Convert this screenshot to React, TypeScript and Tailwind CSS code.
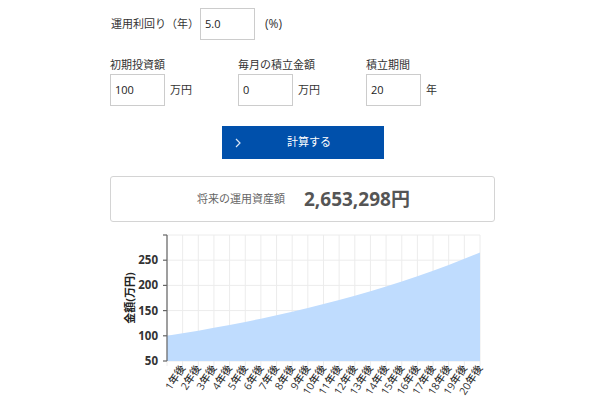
import React from 'react';

const X0 = 167;
const STEP = 15.65;
const yOf = (v: number) => 361 - (v - 50) * 0.504;

const values = Array.from({ length: 21 }, (_, i) => 100 * Math.pow(1.05, i));

const Field: React.FC<{ label: string; value: string; unit: string }> = ({ label, value, unit }) => (
  <div className="w-[128px]">
    <div className="h-[16px] leading-[16px] text-[11px] text-[#333]">{label}</div>
    <div className="mt-[1px] flex items-center">
      <div className="w-[55px] h-[32px] border border-[#ccc] flex items-center pl-[4px] text-[11px] text-[#222]">
        {value}
      </div>
      <span className="ml-[5px] text-[11px] text-[#333]">{unit}</span>
    </div>
  </div>
);

const Chart: React.FC = () => {
  const pts = values.map((v, i) => `${X0 + i * STEP},${yOf(v)}`);
  const area = `M${X0},361 L${pts.join(' L')} L${X0 + 20 * STEP},361 Z`;
  const yTicks = [50, 100, 150, 200, 250, 300];
  return (
    <svg width={600} height={175} viewBox="0 225 600 175" className="block">
      {/* grid */}
      {yTicks.map((t) => (
        <line key={t} x1={X0} x2={X0 + 20 * STEP} y1={yOf(t)} y2={yOf(t)} stroke="#ececec" strokeWidth={1} />
      ))}
      {values.map((_, i) => (
        <line key={i} x1={X0 + i * STEP} x2={X0 + i * STEP} y1={235} y2={366} stroke="#ececec" strokeWidth={1} />
      ))}
      <path d={area} fill="#bfdcfe" />
      {/* y axis */}
      <line x1={X0} x2={X0} y1={235} y2={361} stroke="#666" strokeWidth={1.2} />
      {yTicks.map((t) => (
        <line key={t} x1={X0 - 4} x2={X0} y1={yOf(t)} y2={yOf(t)} stroke="#666" strokeWidth={1.2} />
      ))}
      {yTicks.slice(0, 5).map((t) => (
        <text
          key={t}
          x={158}
          y={yOf(t) + 4}
          textAnchor="end"
          fontSize={11.5}
          fontWeight={700}
          fill="#333"
          fontFamily="'Open Sans', 'Noto Sans CJK JP', sans-serif"
        >
          {t}
        </text>
      ))}
      <text
        x={0}
        y={0}
        transform="translate(134 298) rotate(-90)"
        textAnchor="middle"
        fontSize={11}
        fontWeight={700}
        fill="#222"
        fontFamily="'Open Sans', 'Noto Sans CJK JP', sans-serif"
      >
        金額(万円)
      </text>
      {values.slice(1).map((_, k) => {
        const x = X0 + (k + 1) * STEP;
        return (
          <text
            key={k}
            x={0}
            y={0}
            transform={`translate(${x + 3} 368) rotate(-57)`}
            textAnchor="end"
            fontSize={10.5}
            fontWeight={500}
            fill="#333"
            fontFamily="'Open Sans', 'Noto Sans CJK JP', sans-serif"
          >
            {`${k + 1}年後`}
          </text>
        );
      })}
    </svg>
  );
};

const App: React.FC = () => {
  return (
    <div className="w-[600px] h-[400px] bg-white overflow-hidden font-['Open_Sans','Noto_Sans_CJK_JP',sans-serif]">
      <div className="pt-[8px] pl-[111px] flex items-center h-[40px]">
        <span className="w-[89px] text-[11px] text-[#333]">運用利回り（年）</span>
        <div className="w-[55px] h-[32px] border border-[#ccc] flex items-center pl-[4px] text-[11px] text-[#222]">
          5.0
        </div>
        <span className="ml-[10px] text-[12px] text-[#333]">(%)</span>
      </div>

      <div className="mt-[17px] pl-[110px] flex">
        <Field label="初期投資額" value="100" unit="万円" />
        <Field label="毎月の積立金額" value="0" unit="万円" />
        <Field label="積立期間" value="20" unit="年" />
      </div>

      <div className="mt-[20px] ml-[222px] w-[162px] h-[33px] bg-[#0050ab] relative flex items-center justify-center pl-[12px]">
        <svg className="absolute left-[13px] top-[12px]" width="6" height="10" viewBox="0 0 6 10">
          <polyline points="1,1 5,5 1,9" fill="none" stroke="#dbe6f5" strokeWidth="1.2" />
        </svg>
        <span className="text-[11px] text-white">計算する</span>
      </div>

      <div className="mt-[17px] ml-[110px] w-[385px] h-[46px] border border-[#d4d4d4] rounded-[3px] flex items-center pl-[86px]">
        <span className="text-[11px] text-[#666]">将来の運用資産額</span>
        <span className="ml-[19px] text-[19px] font-bold text-[#555]">2,653,298円</span>
      </div>

      <div className="mt-[3px]">
        <Chart />
      </div>
    </div>
  );
};

export default App;
